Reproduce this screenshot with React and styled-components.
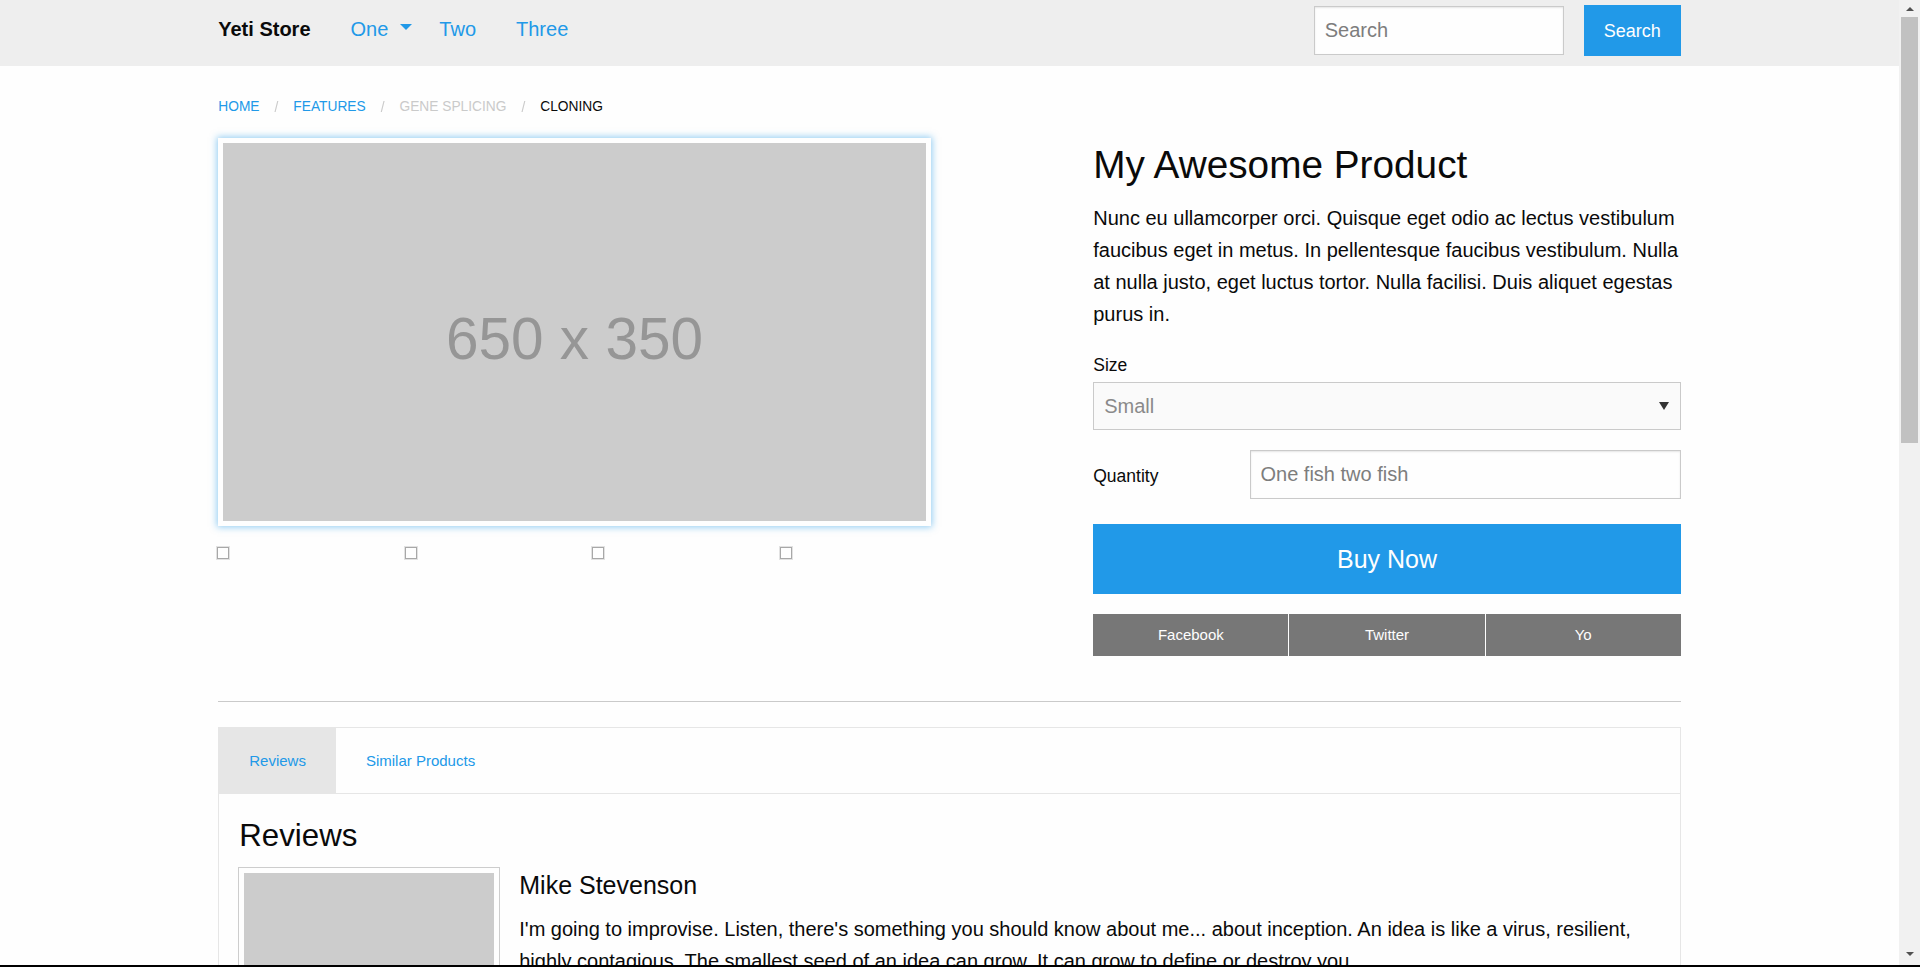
import React from 'react'
import styled, { createGlobalStyle } from 'styled-components'

const colors = {
  primary: '#2199e8',
  text: '#0a0a0a',
  white: '#fefefe',
  bar: '#eeeeee',
  light: '#e6e6e6',
  border: '#cacaca',
  secondary: '#777777',
  placeholder: '#7d7d7d',
  image: '#cccccc',
  imageText: '#969696',
  track: '#f1f1f1',
  thumb: '#c1c1c1'
}

const crumbs = [
  { label: 'Home', kind: 'link' },
  { label: 'Features', kind: 'link' },
  { label: 'Gene Splicing', kind: 'disabled' },
  { label: 'Cloning', kind: 'current' }
]

const reviewText =
  "I'm going to improvise. Listen, there's something you should know about me... about inception. An idea is like a virus, resilient, highly contagious. The smallest seed of an idea can grow. It can grow to define or destroy you."

const reviews = ['Mike Stevenson', 'Mike Stevenson', 'Mike Stevenson', 'Mike Stevenson']

function App () {
  return (
    <Frame>
      <GlobalStyle />
      <Window>
        <Scroller>
          <TopBar>
            <BarInner>
              <Menu>
                <Title>Yeti Store</Title>
                <NavLink $dropdown>
                  One
                  <Caret />
                </NavLink>
                <NavLink>Two</NavLink>
                <NavLink>Three</NavLink>
              </Menu>
              <SearchForm>
                <SearchInput placeholder="Search" />
                <SearchButton>Search</SearchButton>
              </SearchForm>
            </BarInner>
          </TopBar>

          <Container>
            <Breadcrumbs>
              {crumbs.map((c, i) => (
                <Crumb key={c.label} $kind={c.kind}>
                  {c.label}
                  {i < crumbs.length - 1 && <Slash>/</Slash>}
                </Crumb>
              ))}
            </Breadcrumbs>

            <ProductRow>
              <div>
                <Thumbnail>
                  <Placeholder>650 x 350</Placeholder>
                </Thumbnail>
                <Gallery>
                  {[0, 1, 2, 3].map(i => (
                    <div key={i}>
                      <BrokenImage />
                    </div>
                  ))}
                </Gallery>
              </div>

              <div>
                <ProductTitle>My Awesome Product</ProductTitle>
                <Lead>
                  Nunc eu ullamcorper orci. Quisque eget odio ac lectus vestibulum faucibus eget in metus. In
                  pellentesque faucibus vestibulum. Nulla at nulla justo, eget luctus tortor. Nulla facilisi. Duis
                  aliquet egestas purus in.
                </Lead>
                <FieldLabel>Size</FieldLabel>
                <SelectWrap>
                  <Select defaultValue="small">
                    <option value="small">Small</option>
                    <option value="medium">Medium</option>
                    <option value="large">Large</option>
                  </Select>
                  <SelectArrow />
                </SelectWrap>
                <QtyRow>
                  <QtyLabel>Quantity</QtyLabel>
                  <TextInput placeholder="One fish two fish" />
                </QtyRow>
                <BuyButton>Buy Now</BuyButton>
                <ShareGroup>
                  <ShareButton>Facebook</ShareButton>
                  <ShareButton>Twitter</ShareButton>
                  <ShareButton>Yo</ShareButton>
                </ShareGroup>
              </div>
            </ProductRow>

            <Divider />

            <TabList>
              <Tab $active>Reviews</Tab>
              <Tab>Similar Products</Tab>
            </TabList>
            <TabPanel>
              <PanelTitle>Reviews</PanelTitle>
              {reviews.map((name, i) => (
                <MediaObject key={i}>
                  <Avatar>
                    <AvatarImage>200 x 200</AvatarImage>
                  </Avatar>
                  <div>
                    <ReviewerName>{name}</ReviewerName>
                    <ReviewText>{reviewText}</ReviewText>
                  </div>
                </MediaObject>
              ))}
            </TabPanel>
          </Container>
        </Scroller>

        <ScrollTrack>
          <ScrollButton>
            <ScrollArrow $dir="up" />
          </ScrollButton>
          <ScrollThumb />
          <ScrollButton $end>
            <ScrollArrow $dir="down" />
          </ScrollButton>
        </ScrollTrack>
      </Window>
      <BottomEdge />
    </Frame>
  )
}

export default App

const GlobalStyle = createGlobalStyle`
  html, body {
    margin: 0;
    padding: 0;
    height: 100%;
    overflow: hidden;
  }
  body {
    font-family: 'Liberation Sans', Arial, sans-serif;
    color: ${colors.text};
    background: ${colors.white};
  }
  #root {
    height: 100%;
  }
  *, *::before, *::after {
    box-sizing: border-box;
  }
  ::placeholder {
    color: ${colors.placeholder};
    opacity: 1;
  }
`

const Frame = styled.div`
  height: 100vh;
  display: flex;
  flex-direction: column;
  background: #000;
`

const Window = styled.div`
  flex: 1;
  min-height: 0;
  display: flex;
`

const Scroller = styled.div`
  flex: 1;
  min-width: 0;
  overflow-y: auto;
  scrollbar-width: none;
  background: ${colors.white};
  padding-bottom: 20px;
`

const ScrollTrack = styled.div`
  flex: none;
  width: 21px;
  display: flex;
  flex-direction: column;
  background: ${colors.track};
`

const ScrollButton = styled.div`
  flex: none;
  height: 17px;
  display: flex;
  justify-content: center;
  align-items: ${p => (p.$end ? 'flex-start' : 'center')};
  padding-top: ${p => (p.$end ? '4px' : '0')};
  margin-top: ${p => (p.$end ? 'auto' : '0')};
`

const ScrollArrow = styled.span`
  width: 0;
  height: 0;
  border-style: solid;
  border-width: ${p => (p.$dir === 'up' ? '0 4.5px 4.5px' : '4.5px 4.5px 0')};
  border-color: ${p =>
    p.$dir === 'up' ? 'transparent transparent #505050' : '#505050 transparent transparent'};
`

const ScrollThumb = styled.div`
  height: 426px;
  margin: 0 2px;
  background: ${colors.thumb};
`

const BottomEdge = styled.div`
  flex: none;
  height: 2px;
  background: #000;
`

const TopBar = styled.header`
  background: ${colors.bar};
  height: 66px;
`

const BarInner = styled.div`
  width: 1462.5px;
  height: 100%;
  margin: 0 auto;
  padding-bottom: 5px;
  display: flex;
  align-items: center;
  justify-content: space-between;
`

const Menu = styled.nav`
  display: flex;
  align-items: center;
  margin-top: -3px;
`

const Title = styled.span`
  font-size: 20px;
  line-height: 20px;
  font-weight: bold;
  padding: 14px 20px 14px 0;
`

const NavLink = styled.a`
  display: flex;
  align-items: center;
  gap: 12px;
  font-size: 20px;
  line-height: 20px;
  color: ${colors.primary};
  padding: ${p => (p.$dropdown ? '14px 7px 14px 20px' : '14px 20px')};
  cursor: pointer;
`

const Caret = styled.span`
  width: 0;
  height: 0;
  border-style: solid;
  border-width: 6px 6px 0;
  border-color: ${colors.primary} transparent transparent;
  margin-top: -5px;
`

const SearchForm = styled.div`
  display: flex;
  align-items: center;
  gap: 20px;
`

const SearchInput = styled.input`
  width: 250px;
  height: 48.75px;
  margin: 0;
  padding: 10px;
  border: 1px solid ${colors.border};
  border-radius: 0;
  box-shadow: inset 0 1px 2px rgba(10, 10, 10, 0.1);
  background: ${colors.white};
  font-family: inherit;
  font-size: 20px;
  color: ${colors.text};
`

const SearchButton = styled.button`
  height: 51px;
  padding: 0 20px;
  border: none;
  border-radius: 0;
  background: ${colors.primary};
  color: ${colors.white};
  font-family: inherit;
  font-size: 18px;
  line-height: 1;
`

const Container = styled.main`
  width: 1462.5px;
  margin: 0 auto;
`

const Breadcrumbs = styled.ul`
  list-style: none;
  margin: 34px 0 24px;
  padding: 0;
  display: flex;
  font-size: 13.75px;
  line-height: 13.75px;
  text-transform: uppercase;
`

const Crumb = styled.li`
  color: ${p =>
    p.$kind === 'link' ? colors.primary : p.$kind === 'disabled' ? colors.border : colors.text};
`

const Slash = styled.span`
  position: relative;
  top: 1px;
  margin: 0 15px;
  color: ${colors.border};
`

const ProductRow = styled.section`
  display: grid;
  grid-template-columns: 712.5px 587.5px;
  column-gap: 162.5px;
  align-items: start;
`

const Thumbnail = styled.div`
  border: 5px solid ${colors.white};
  box-shadow: 0 0 7px 1px rgba(33, 153, 232, 0.5);
`

const Placeholder = styled.div`
  aspect-ratio: 650 / 350;
  background: ${colors.image};
  color: ${colors.imageText};
  display: flex;
  align-items: center;
  justify-content: center;
  padding-top: 14px;
  font-size: 58.5px;
  line-height: 1;
`

const Gallery = styled.div`
  display: grid;
  grid-template-columns: repeat(4, 187.5px);
  margin: 19.7px 0 0 -2.25px;
`

const BrokenImage = styled.span`
  display: block;
  width: 14px;
  height: 14px;
  border: 1px solid #e2e2e2;
  box-shadow: inset 0 0 0 1px #a8a8a8;
  background: ${colors.white};
`

const ProductTitle = styled.h3`
  margin: 0 0 10px;
  font-size: 38.75px;
  line-height: 1.4;
  font-weight: normal;
`

const Lead = styled.p`
  margin: 0 0 20px;
  font-size: 20px;
  line-height: 32px;
`

const FieldLabel = styled.label`
  display: block;
  font-size: 17.5px;
  line-height: 31.5px;
`

const SelectWrap = styled.div`
  position: relative;
  margin-bottom: 20px;
`

const Select = styled.select`
  display: block;
  width: 100%;
  height: 48.75px;
  margin: 0;
  padding: 0 30px 0 10px;
  border: 1px solid ${colors.border};
  border-radius: 0;
  appearance: none;
  background: #fafafa;
  color: #8a8a8a;
  font-family: inherit;
  font-size: 20px;
`

const SelectArrow = styled.span`
  position: absolute;
  right: 12px;
  top: 20px;
  width: 0;
  height: 0;
  border-style: solid;
  border-width: 8px 5px 0;
  border-color: #333 transparent transparent;
  pointer-events: none;
`

const QtyRow = styled.div`
  display: grid;
  grid-template-columns: 118.75px 431.25px;
  column-gap: 37.5px;
  align-items: start;
`

const QtyLabel = styled.label`
  display: block;
  margin: 0 0 20px;
  padding: 10.25px 0 12.25px;
  font-size: 17.5px;
  line-height: 31.5px;
`

const TextInput = styled.input`
  display: block;
  width: 100%;
  height: 48.75px;
  margin: 0 0 20px;
  padding: 10px;
  border: 1px solid ${colors.border};
  border-radius: 0;
  box-shadow: inset 0 1px 2px rgba(10, 10, 10, 0.1);
  background: ${colors.white};
  font-family: inherit;
  font-size: 20px;
  color: ${colors.text};
`

const BuyButton = styled.button`
  display: block;
  width: 100%;
  height: 69.5px;
  margin: 0 0 20px;
  border: none;
  border-radius: 0;
  background: ${colors.primary};
  color: ${colors.white};
  font-family: inherit;
  font-size: 25px;
  line-height: 1;
`

const ShareGroup = styled.div`
  display: grid;
  grid-template-columns: repeat(3, 1fr);
  gap: 1px;
  margin-bottom: 20px;
`

const ShareButton = styled.button`
  height: 42px;
  border: none;
  border-radius: 0;
  background: ${colors.secondary};
  color: ${colors.white};
  font-family: inherit;
  font-size: 15px;
  line-height: 1;
`

const Divider = styled.hr`
  margin: 25px 0;
  border: 0;
  border-bottom: 1px solid ${colors.border};
`

const TabList = styled.ul`
  list-style: none;
  margin: 0;
  padding: 0;
  display: flex;
  border: 1px solid ${colors.light};
  background: ${colors.white};
`

const Tab = styled.li`
  padding: 25px 30px;
  font-size: 15px;
  line-height: 15px;
  color: ${colors.primary};
  background: ${p => (p.$active ? colors.light : 'transparent')};
  cursor: pointer;
`

const TabPanel = styled.div`
  border: 1px solid ${colors.light};
  border-top: 0;
  padding: 20px;
  background: ${colors.white};
`

const PanelTitle = styled.h4`
  margin: 0 0 10px;
  font-size: 31.25px;
  line-height: 1.4;
  font-weight: normal;
`

const MediaObject = styled.div`
  display: flex;
  align-items: flex-start;
  margin-bottom: 20px;
`

const Avatar = styled.div`
  flex: none;
  margin: 0 20px 20px 0;
  border: 5px solid ${colors.white};
  box-shadow: 0 0 0 1px rgba(10, 10, 10, 0.2);
`

const AvatarImage = styled.div`
  width: 250px;
  height: 250px;
  background: ${colors.image};
  color: ${colors.imageText};
  display: flex;
  align-items: center;
  justify-content: center;
  font-size: 25px;
`

const ReviewerName = styled.h5`
  margin: 0 0 10px;
  font-size: 25px;
  line-height: 1.4;
  font-weight: normal;
`

const ReviewText = styled.p`
  margin: 0 0 20px;
  font-size: 20px;
  line-height: 32px;
`
